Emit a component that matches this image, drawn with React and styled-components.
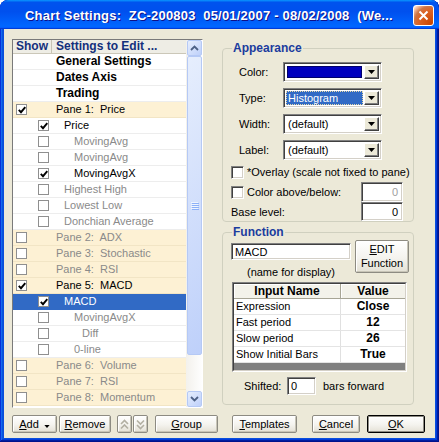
import React from 'react';
import styled, { createGlobalStyle } from 'styled-components';

const FONT = `"Liberation Sans", Arial, sans-serif`;

const GlobalStyle = createGlobalStyle`
  html, body { margin: 0; padding: 0; background: #ffffff; }
  body { font-family: ${FONT}; font-size: 11px; color: #000; }
  *, *::before, *::after { box-sizing: border-box; }
`;

const Window = styled.div`
  width: 439px;
  height: 442px;
  display: flex;
  flex-direction: column;
  background: #0A4FDC;
  border-radius: 8px 8px 0 0;
  overflow: hidden;
  box-shadow: inset -1px -1px #00138c, inset 1px 1px #0831d9, inset -2px -2px #001ea0,
    inset 2px 2px #166aee, inset -3px -3px #003bda, inset 3px 3px #0855dd;
`;

const TitleBar = styled.div`
  height: 29px;
  flex: none;
  display: flex;
  align-items: center;
  padding: 2px 5px 0 25px;
  border-radius: 8px 8px 0 0;
  background: linear-gradient(180deg, #0997ff, #0053ee 8%, #0050ee 40%, #06f 88%, #06f 93%, #005bff 95%, #003dd7 96%, #003dd7);
`;

const TitleText = styled.div`
  flex: 1;
  color: #fff;
  font-weight: bold;
  font-size: 13px;
  letter-spacing: 0.2px;
  white-space: pre;
  overflow: hidden;
  text-shadow: 1px 1px #0f1089;
`;

const CloseBtn = styled.div`
  width: 21px;
  height: 21px;
  flex: none;
  margin-top: -1px;
  border: 1px solid #fff;
  border-radius: 3px;
  display: flex;
  align-items: center;
  justify-content: center;
  background: radial-gradient(circle at 90% 90%, #cc4600 0, #dc6527 55%, #cd7546 70%, #ffccb2 90%, #fff 100%);
`;

const Client = styled.div`
  flex: 1;
  margin: 0 4px 4px 4px;
  background: #ECE9D8;
  padding: 10px 0 0 8px;
  display: flex;
  flex-direction: column;
`;

const MainRow = styled.div`
  display: flex;
  align-items: flex-start;
  height: 369px;
`;

/* ---------- List view ---------- */
const ListView = styled.div`
  width: 191px;
  height: 369px;
  border: 1px solid;
  border-color: #7a7a7a #ffffff #ffffff #7a7a7a;
  background: #fff;
  display: grid;
  grid-template-columns: 1fr 16px;
  overflow: hidden;
`;

const ListBody = styled.div`
  display: flex;
  flex-direction: column;
  overflow: hidden;
`;

const Header = styled.div`
  display: grid;
  grid-template-columns: 39px 1fr;
  height: 14px;
  flex: none;
  background: #EEEDE5;
  border-bottom: 1px solid #CBC7B8;
  font-weight: bold;
  font-size: 12px;
  color: #13307C;
`;

const HeadCell = styled.div`
  padding-left: ${p => p.$pl}px;
  line-height: 13px;
  white-space: nowrap;
  overflow: hidden;
  border-right: ${p => (p.$sep ? '1px solid #C7C4B4' : 'none')};
`;

const Row = styled.div`
  display: grid;
  grid-template-columns: 39px 1fr;
  height: 16px;
  flex: none;
  align-items: center;
  border-bottom: 1px solid ${p => (p.$selected ? '#316AC5' : p.$pane ? '#F2E5C5' : '#EDEDED')};
  background: ${p => (p.$selected ? '#316AC5' : p.$pane ? '#FDF1D4' : '#ffffff')};
  color: ${p => (p.$selected ? '#ffffff' : p.$dim ? '#8A8A8A' : '#000000')};
  font-size: ${p => (p.$bold ? 12 : 11)}px;
  font-weight: ${p => (p.$bold ? 'bold' : 'normal')};
`;

const ShowCell = styled.div`
  display: flex;
  align-items: center;
  padding-left: ${p => (p.$lvl > 0 ? 25 : 3)}px;
`;

const LabelCell = styled.div`
  padding-left: ${p => 4 + [0, 8, 18, 26][p.$lvl]}px;
  white-space: pre;
  line-height: 15px;
`;

const ListCheck = styled.span`
  display: inline-flex;
  align-items: center;
  justify-content: center;
  width: 11px;
  height: 11px;
  border: 1px solid #8f8f8f;
  background: #fff;
`;

const Scroll = styled.div`
  display: flex;
  flex-direction: column;
  background: linear-gradient(90deg, #F3F1EC, #FEFEFE);
  padding-left: 1px;
`;

const ScrollBtn = styled.div`
  height: ${p => p.$h}px;
  flex: none;
  border: 1px solid #B5C9F5;
  border-radius: 2px;
  background: linear-gradient(135deg, #E6EEFD, #BED0FA);
  display: flex;
  align-items: center;
  justify-content: center;
`;

const ScrollGap = styled.div`
  flex: 1;
`;

/* ---------- Right panel ---------- */
const RightPanel = styled.div`
  width: 192px;
  margin-left: 19px;
  margin-top: 2px;
  display: flex;
  flex-direction: column;
  gap: 3px;
`;

const Group = styled.fieldset`
  margin: 0;
  padding: 0;
  min-width: 0;
  border: 1px solid #D0D0BF;
  border-radius: 4px;
`;

const Legend = styled.legend`
  margin-left: 9px;
  padding: 0 1px;
  height: 14px;
  line-height: 14px;
  font-weight: bold;
  font-size: 12px;
  color: #1B3C9E;
`;

const AppearanceBody = styled.div`
  padding: 7px 10px 0 8px;
  display: flex;
  flex-direction: column;
`;

const FormRow = styled.div`
  display: grid;
  grid-template-columns: 44px 99px;
  align-items: center;
  height: 20px;
  margin-left: 8px;
  margin-bottom: 6px;
`;

const FieldLabel = styled.span`
  white-space: nowrap;
`;

const SelectBox = styled.div`
  height: 20px;
  display: flex;
  align-items: stretch;
  background: #fff;
  border: 1px solid;
  border-color: #808080 #ffffff #ffffff #808080;
  box-shadow: inset 1px 1px #404040, inset -1px -1px #D4D0C8;
  padding: 2px;
`;

const SelectValue = styled.div`
  flex: 1;
  display: flex;
  align-items: center;
  padding-left: 2px;
  margin-right: 1px;
  white-space: nowrap;
  overflow: hidden;
  background: ${p => (p.$hl ? '#316AC5' : 'transparent')};
  color: ${p => (p.$hl ? '#fff' : '#000')};
  outline: ${p => (p.$hl ? '1px dotted #E8D9A8' : 'none')};
  outline-offset: -1px;
`;

const Swatch = styled.div`
  flex: 1;
  margin: 1px 2px 1px 1px;
  background: #0000BE;
  border: 1px solid #00006A;
`;

const DropBtn = styled.div`
  width: 15px;
  flex: none;
  background: #ECE9D8;
  border: 1px solid;
  border-color: #ffffff #404040 #404040 #ffffff;
  box-shadow: inset -1px -1px #808080;
  display: flex;
  align-items: center;
  justify-content: center;
`;

const CheckRow = styled.div`
  display: grid;
  grid-template-columns: 1fr 42px;
  align-items: center;
  height: ${p => p.$h}px;
  margin-top: ${p => p.$mt}px;
`;

const CheckLabel = styled.label`
  display: flex;
  align-items: center;
  gap: 3px;
  white-space: nowrap;
`;

const Box3D = styled.span`
  width: 13px;
  height: 13px;
  flex: none;
  background: #fff;
  border: 1px solid;
  border-color: #808080 #ffffff #ffffff #808080;
  box-shadow: inset 1px 1px #404040, inset -1px -1px #D4D0C8;
`;

const EditBox = styled.div`
  height: ${p => p.$h || 20}px;
  width: ${p => (p.$w ? `${p.$w}px` : 'auto')};
  background: #fff;
  border: 1px solid;
  border-color: #808080 #ffffff #ffffff #808080;
  box-shadow: inset 1px 1px #404040, inset -1px -1px #D4D0C8;
  display: flex;
  align-items: center;
  justify-content: ${p => (p.$right ? 'flex-end' : 'flex-start')};
  padding: 0 4px 0 3px;
  color: ${p => (p.$disabled ? '#A0A0A0' : '#000')};
  margin-top: ${p => p.$mt || 0}px;
`;

const FunctionBody = styled.div`
  padding: 1px 4px 9px 8px;
  display: flex;
  flex-direction: column;
`;

const TopRow = styled.div`
  display: grid;
  grid-template-columns: 120px 54px;
  column-gap: 4px;
  align-items: start;
`;

const NameCol = styled.div`
  display: flex;
  flex-direction: column;
`;

const Caption = styled.div`
  text-align: center;
  line-height: 13px;
  margin-top: 6px;
`;

const Btn = styled.button`
  height: ${p => p.$h || 18}px;
  width: ${p => p.$w}px;
  margin: 0 0 0 ${p => p.$ml || 0}px;
  padding: 0;
  flex: none;
  font-family: ${FONT};
  font-size: 11px;
  color: #000;
  background: linear-gradient(180deg, #FFFFFF 0%, #F4F3EE 55%, #E4E1D5 100%);
  border: 1px solid ${p => (p.$default ? '#000' : '#8D8B82')};
  border-radius: 2px;
  box-shadow: ${p =>
    p.$default
      ? 'inset 0 0 0 1px #8D8B82, inset 2px 2px #fff'
      : 'inset 1px 1px #fff, inset -1px -1px #C8C5B7'};
  display: flex;
  flex-direction: ${p => (p.$col ? 'column' : 'row')};
  align-items: center;
  justify-content: center;
  gap: ${p => (p.$col ? 1 : 5)}px;
  line-height: 13px;
`;

const BtnArrow = styled.span`
  display: flex;
  margin-top: 5px;
`;

const TableOuter = styled.div`
  margin: 3px 0 0 1px;
  width: 175px;
  height: 90px;
  border: 1px solid;
  border-color: #808080 #ffffff #ffffff #808080;
`;

const TableInner = styled.div`
  height: 100%;
  border: 1px solid;
  border-color: #404040 #D4D0C8 #D4D0C8 #404040;
  background: #fff;
  display: flex;
  flex-direction: column;
`;

const THead = styled.div`
  display: grid;
  grid-template-columns: 107px 1fr;
  height: 15px;
  flex: none;
  background: #F3F2EA;
  border-bottom: 1px solid #A7A595;
  font-weight: bold;
  font-size: 12px;
`;

const TH = styled.div`
  text-align: center;
  line-height: 14px;
  border-right: ${p => (p.$sep ? '1px solid #A7A595' : 'none')};
  box-shadow: inset 1px 1px #fff;
`;

const TRow = styled.div`
  display: grid;
  grid-template-columns: 107px 1fr;
  height: 16px;
  flex: none;
  border-bottom: 1px solid #E4E4E4;
`;

const TName = styled.div`
  padding-left: 2px;
  line-height: 15px;
  border-right: 1px solid #E0E0E0;
  white-space: nowrap;
`;

const TVal = styled.div`
  text-align: center;
  font-weight: bold;
  font-size: 12px;
  line-height: 15px;
`;

const TBand = styled.div`
  flex: 1;
  background: #808080;
`;

const ShiftRow = styled.div`
  display: flex;
  align-items: center;
  height: 18px;
  margin-top: 5px;
  padding-left: 13px;
`;

const ShiftLabel = styled.span`
  width: 43px;
`;

const ShiftTail = styled.span`
  margin-left: 7px;
`;

const ButtonBar = styled.div`
  display: flex;
  align-items: center;
  margin-top: 7px;
  height: 18px;
`;

/* ---------- icons ---------- */
const CheckMark = ({ color = '#000' }) => (
  <svg width="8" height="8" viewBox="0 0 8 8">
    <path d="M0.8 3.8 L3 6.2 L7.3 1.2" stroke={color} strokeWidth="1.9" fill="none" />
  </svg>
);

const Arrow = ({ w = 7, h = 4 }) => (
  <svg width={w} height={h} viewBox="0 0 7 4">
    <polygon points="0,0 7,0 3.5,4" fill="#000" />
  </svg>
);

const Chevron = ({ up }) => (
  <svg width="9" height="6" viewBox="0 0 9 6">
    <polyline
      points={up ? '1,5 4.5,1.5 8,5' : '1,1 4.5,4.5 8,1'}
      stroke="#4D6185"
      strokeWidth="1.8"
      fill="none"
    />
  </svg>
);

const Grip = () => (
  <svg width="8" height="8" viewBox="0 0 8 8">
    {[0, 2, 4, 6].map(y => (
      <g key={y}>
        <rect x="0" y={y} width="7" height="1" fill="#EEF4FE" />
        <rect x="1" y={y + 1} width="7" height="1" fill="#8CB0F8" />
      </g>
    ))}
  </svg>
);

const DoubleChevron = ({ up }) => (
  <svg width="9" height="11" viewBox="0 0 9 11">
    <g stroke="#B3B0A3" strokeWidth="1.6" fill="none">
      {up ? (
        <>
          <polyline points="1,5 4.5,1.5 8,5" />
          <polyline points="1,9.5 4.5,6 8,9.5" />
        </>
      ) : (
        <>
          <polyline points="1,1.5 4.5,5 8,1.5" />
          <polyline points="1,6 4.5,9.5 8,6" />
        </>
      )}
    </g>
  </svg>
);

const CloseX = () => (
  <svg width="11" height="11" viewBox="0 0 11 11">
    <path d="M1.5 1.5 L9.5 9.5 M9.5 1.5 L1.5 9.5" stroke="#fff" strokeWidth="2" />
  </svg>
);

const rows = [
  { label: 'General Settings', bold: true, noCheck: true, lvl: 0 },
  { label: 'Dates Axis', bold: true, noCheck: true, lvl: 0 },
  { label: 'Trading', bold: true, noCheck: true, lvl: 0 },
  { label: 'Pane 1:  Price', pane: true, checked: true, lvl: 0 },
  { label: 'Price', lvl: 1, checked: true },
  { label: 'MovingAvg', lvl: 2, dim: true },
  { label: 'MovingAvg', lvl: 2, dim: true },
  { label: 'MovingAvgX', lvl: 2, checked: true },
  { label: 'Highest High', lvl: 1, dim: true },
  { label: 'Lowest Low', lvl: 1, dim: true },
  { label: 'Donchian Average', lvl: 1, dim: true },
  { label: 'Pane 2:  ADX', pane: true, dim: true, lvl: 0 },
  { label: 'Pane 3:  Stochastic', pane: true, dim: true, lvl: 0 },
  { label: 'Pane 4:  RSI', pane: true, dim: true, lvl: 0 },
  { label: 'Pane 5:  MACD', pane: true, checked: true, lvl: 0 },
  { label: 'MACD', lvl: 1, checked: true, selected: true },
  { label: 'MovingAvgX', lvl: 2, dim: true },
  { label: 'Diff', lvl: 3, dim: true },
  { label: '0-line', lvl: 2, dim: true },
  { label: 'Pane 6:  Volume', pane: true, dim: true, lvl: 0 },
  { label: 'Pane 7:  RSI', pane: true, dim: true, lvl: 0 },
  { label: 'Pane 8:  Momentum', pane: true, dim: true, lvl: 0 },
];

const inputs = [
  ['Expression', 'Close'],
  ['Fast period', '12'],
  ['Slow period', '26'],
  ['Show Initial Bars', 'True'],
];

const Select = ({ children }) => (
  <SelectBox>
    {children}
    <DropBtn>
      <Arrow />
    </DropBtn>
  </SelectBox>
);

export default function App() {
  return (
    <>
      <GlobalStyle />
      <Window>
        <TitleBar>
          <TitleText>Chart Settings:  ZC-200803  05/01/2007 - 08/02/2008  (We...</TitleText>
          <CloseBtn>
            <CloseX />
          </CloseBtn>
        </TitleBar>
        <Client>
          <MainRow>
            <ListView>
              <ListBody>
                <Header>
                  <HeadCell $pl={3} $sep>Show</HeadCell>
                  <HeadCell $pl={4}>Settings to Edit ...</HeadCell>
                </Header>
                {rows.map((r, i) => (
                  <Row key={i} $pane={r.pane} $dim={r.dim} $bold={r.bold} $selected={r.selected}>
                    <ShowCell $lvl={r.lvl}>
                      {!r.noCheck && <ListCheck>{r.checked && <CheckMark />}</ListCheck>}
                    </ShowCell>
                    <LabelCell $lvl={r.lvl}>{r.label}</LabelCell>
                  </Row>
                ))}
              </ListBody>
              <Scroll>
                <ScrollBtn $h={16}>
                  <Chevron up />
                </ScrollBtn>
                <ScrollBtn $h={299}>
                  <Grip />
                </ScrollBtn>
                <ScrollGap />
                <ScrollBtn $h={16}>
                  <Chevron />
                </ScrollBtn>
              </Scroll>
            </ListView>

            <RightPanel>
              <Group>
                <Legend>Appearance</Legend>
                <AppearanceBody>
                  <FormRow>
                    <FieldLabel>Color:</FieldLabel>
                    <Select>
                      <Swatch />
                    </Select>
                  </FormRow>
                  <FormRow>
                    <FieldLabel>Type:</FieldLabel>
                    <Select>
                      <SelectValue $hl>Histogram</SelectValue>
                    </Select>
                  </FormRow>
                  <FormRow>
                    <FieldLabel>Width:</FieldLabel>
                    <Select>
                      <SelectValue>(default)</SelectValue>
                    </Select>
                  </FormRow>
                  <FormRow>
                    <FieldLabel>Label:</FieldLabel>
                    <Select>
                      <SelectValue>(default)</SelectValue>
                    </Select>
                  </FormRow>
                  <CheckRow $h={14} $mt={-1}>
                    <CheckLabel>
                      <Box3D />
                      *Overlay (scale not fixed to pane)
                    </CheckLabel>
                  </CheckRow>
                  <CheckRow $h={20} $mt={3}>
                    <CheckLabel>
                      <Box3D />
                      Color above/below:
                    </CheckLabel>
                    <EditBox $right $disabled>0</EditBox>
                  </CheckRow>
                  <CheckRow $h={19} $mt={0}>
                    <FieldLabel>Base level:</FieldLabel>
                    <EditBox $right $h={19}>0</EditBox>
                  </CheckRow>
                </AppearanceBody>
              </Group>

              <Group>
                <Legend>Function</Legend>
                <FunctionBody>
                  <TopRow>
                    <NameCol>
                      <EditBox $h={17} $mt={3}>MACD</EditBox>
                      <Caption>(name for display)</Caption>
                    </NameCol>
                    <Btn $w={54} $h={33} $col>
                      <span>
                        <u>E</u>DIT
                      </span>
                      <span>Function</span>
                    </Btn>
                  </TopRow>
                  <TableOuter>
                    <TableInner>
                      <THead>
                        <TH $sep>Input Name</TH>
                        <TH>Value</TH>
                      </THead>
                      {inputs.map(([n, v]) => (
                        <TRow key={n}>
                          <TName>{n}</TName>
                          <TVal>{v}</TVal>
                        </TRow>
                      ))}
                      <TBand />
                    </TableInner>
                  </TableOuter>
                  <ShiftRow>
                    <ShiftLabel>Shifted:</ShiftLabel>
                    <EditBox $w={29} $h={18}>0</EditBox>
                    <ShiftTail>bars forward</ShiftTail>
                  </ShiftRow>
                </FunctionBody>
              </Group>
            </RightPanel>
          </MainRow>

          <ButtonBar>
            <Btn $w={45}>
              <span>
                <u>A</u>dd
              </span>
              <BtnArrow>
                <Arrow w={6} h={3} />
              </BtnArrow>
            </Btn>
            <Btn $w={52} $ml={2}>
              <span>
                <u>R</u>emove
              </span>
            </Btn>
            <Btn $w={15} $ml={6}>
              <DoubleChevron up />
            </Btn>
            <Btn $w={15} $ml={1}>
              <DoubleChevron />
            </Btn>
            <Btn $w={63} $ml={7}>
              <span>
                <u>G</u>roup
              </span>
            </Btn>
            <Btn $w={65} $ml={14}>
              <span>
                <u>T</u>emplates
              </span>
            </Btn>
            <Btn $w={48} $ml={15}>
              <span>
                <u>C</u>ancel
              </span>
            </Btn>
            <Btn $w={58} $ml={7} $default>
              <span>
                <u>O</u>K
              </span>
            </Btn>
          </ButtonBar>
        </Client>
      </Window>
    </>
  );
}
